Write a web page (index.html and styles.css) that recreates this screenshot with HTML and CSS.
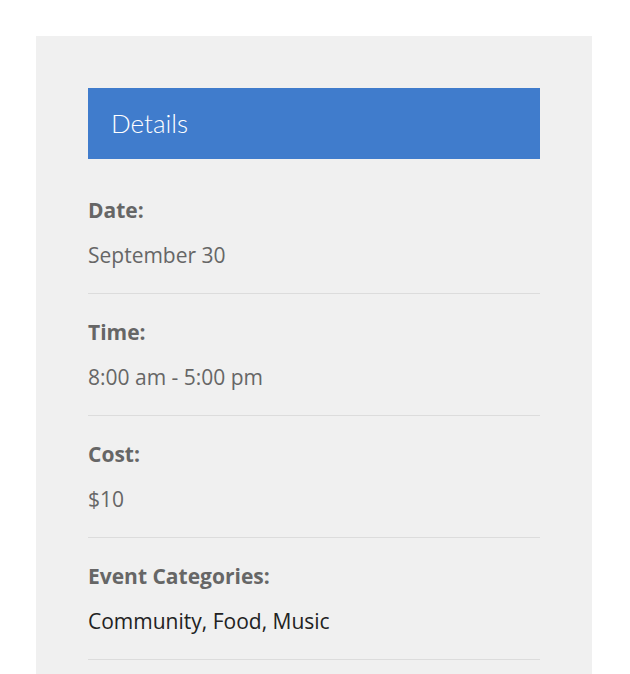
FILE: index.html
```html
<!DOCTYPE html>
<html>
<head>
<meta charset="utf-8">
<link rel="stylesheet" href="styles.css">
</head>
<body>
<div class="panel">
  <h2 class="panel-title">Details</h2>
  <dl class="details">
    <div class="item">
      <dt class="label">Date:</dt>
      <dd class="value">September 30</dd>
    </div>
    <div class="item">
      <dt class="label">Time:</dt>
      <dd class="value">8:00 am - 5:00 pm</dd>
    </div>
    <div class="item">
      <dt class="label">Cost:</dt>
      <dd class="value">$10</dd>
    </div>
    <div class="item">
      <dt class="label">Event Categories:</dt>
      <dd class="value links"><a href="#">Community</a>, <a href="#">Food</a>, <a href="#">Music</a></dd>
    </div>
  </dl>
</div>
</body>
</html>
```
FILE: styles.css
```css
html, body {
  margin: 0;
  padding: 0;
  background: #ffffff;
}
body {
  padding: 36px 38px 0 36px;
  font-family: "Open Sans", "Liberation Sans", sans-serif;
}
.panel {
  background: #f0f0f0;
  padding: 52px 52px 14px;
  min-height: 638px;
  box-sizing: border-box;
}
.panel-title {
  margin: 0 0 13px;
  background: #407ccc;
  color: #ffffff;
  font-family: "Lato", "Open Sans", sans-serif;
  font-weight: 300;
  font-size: 26px;
  line-height: 71px;
  height: 71px;
  padding: 0 23px;
  box-sizing: border-box;
}
.details {
  margin: 0;
}
.item {
  padding: 23px 0;
  border-bottom: 1px solid #dcdcdc;
}
.label {
  font-weight: 700;
  font-size: 21px;
  line-height: 30px;
  color: #666666;
}
.value {
  margin: 15px 0 0;
  font-size: 21px;
  line-height: 30px;
  color: #666666;
}
.links {
  color: #222222;
}
.links a {
  color: #222222;
  text-decoration: none;
}
```
